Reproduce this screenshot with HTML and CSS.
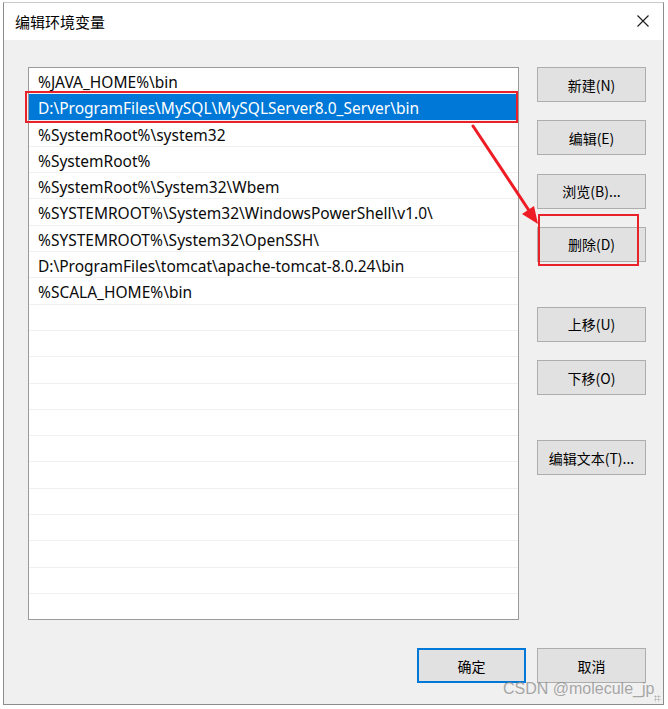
FILE: index.html
```html
<!DOCTYPE html>
<html lang="zh-CN">
<head>
<meta charset="utf-8">
<title>编辑环境变量</title>
<link rel="stylesheet" href="styles.css">
</head>
<body>
<div class="window">
  <div class="titlebar">
    <span class="title">编辑环境变量</span>
    <svg class="close" width="12" height="12" viewBox="0 0 12 12"><path d="M0.5 0.5 L11.5 11.5 M11.5 0.5 L0.5 11.5" stroke="#1a1a1a" stroke-width="1.1" fill="none"/></svg>
  </div>
  <div class="body">
    <div class="main">
      <div class="list">
        <div class="row">%JAVA_HOME%\bin</div>
        <div class="row selected">D:\ProgramFiles\MySQL\MySQLServer8.0_Server\bin</div>
        <div class="row">%SystemRoot%\system32</div>
        <div class="row">%SystemRoot%</div>
        <div class="row">%SystemRoot%\System32\Wbem</div>
        <div class="row">%SYSTEMROOT%\System32\WindowsPowerShell\v1.0\</div>
        <div class="row">%SYSTEMROOT%\System32\OpenSSH\</div>
        <div class="row">D:\ProgramFiles\tomcat\apache-tomcat-8.0.24\bin</div>
        <div class="row">%SCALA_HOME%\bin</div>
        <div class="row"></div>
        <div class="row"></div>
        <div class="row"></div>
        <div class="row"></div>
        <div class="row"></div>
        <div class="row"></div>
        <div class="row"></div>
        <div class="row"></div>
        <div class="row"></div>
        <div class="row"></div>
        <div class="row"></div>
        <div class="row last"></div>
        <div class="mark mark-row"></div>
      </div>
      <div class="buttons">
        <button class="btn">新建(N)</button>
        <button class="btn">编辑(E)</button>
        <button class="btn">浏览(B)...</button>
        <button class="btn">删除(D)</button>
        <button class="btn spaced">上移(U)</button>
        <button class="btn">下移(O)</button>
        <button class="btn spaced">编辑文本(T)...</button>
        <div class="mark mark-btn"></div>
      </div>
    </div>
    <div class="footer">
      <button class="btn default">确定</button>
      <button class="btn">取消</button>
    </div>
  </div>
</div>
<svg class="arrow" width="668" height="709" viewBox="0 0 668 709">
  <line x1="473" y1="126" x2="530" y2="212" stroke="#ee1c25" stroke-width="3" stroke-linecap="round"/>
  <polygon points="538,224 522,214 534,206" fill="#ee1c25"/>
</svg>
<div class="watermark">CSDN @molecule_jp</div>
<div class="grip"></div>
</body>
</html>
```
FILE: styles.css
```css
html, body {
  margin: 0;
  padding: 0;
  background: #ffffff;
}
body {
  position: relative;
  width: 668px;
  height: 709px;
  overflow: hidden;
  font-family: "Noto Sans", "Noto Sans CJK SC", sans-serif;
  color: #000;
}
.window {
  margin: 2px 0 0 3px;
  width: 661px;
  height: 703px;
  box-sizing: border-box;
  border: 1px solid #8c8c8c;
  border-top-color: #c8c8c8;
  display: flex;
  flex-direction: column;
  background: #f0f0f0;
}
.titlebar {
  height: 37px;
  flex: none;
  background: #ffffff;
  display: flex;
  align-items: center;
  justify-content: space-between;
  padding: 0 14px 0 11px;
}
.title {
  font-family: "Noto Sans CJK SC", sans-serif;
  font-size: 15px;
  color: #000;
  margin-top: -1px;
}
.close {
  display: block;
  margin-top: -2px;
}
.body {
  padding: 27px 17px 21px 24px;
  display: flex;
  flex-direction: column;
}
.main {
  display: flex;
  gap: 18px;
}
.list {
  position: relative;
  width: 491px;
  height: 553px;
  box-sizing: border-box;
  border: 1px solid #9a9a9a;
  background: #ffffff;
}
.row {
  height: 26.3px;
  box-sizing: border-box;
  border-bottom: 1px solid #f0f0f0;
  padding-left: 9px;
  font-size: 15.5px;
  line-height: 29px;
  white-space: nowrap;
  overflow: hidden;
  color: #0a0a0a;
}
.row.last {
  height: 24.9px;
  border-bottom: none;
}
.row.selected {
  background: #0078d7;
  color: #ffffff;
}
.mark {
  position: absolute;
  border: 2px solid #e8212b;
  box-sizing: border-box;
  pointer-events: none;
}
.mark-row {
  left: -4px;
  top: 23px;
  width: 493px;
  height: 32px;
}
.buttons {
  position: relative;
  width: 109px;
  display: flex;
  flex-direction: column;
}
.btn {
  width: 109px;
  height: 35px;
  box-sizing: border-box;
  border: 1px solid #adadad;
  background: #e1e1e1;
  font-family: "Noto Sans CJK SC", sans-serif;
  font-size: 14px;
  color: #000;
  padding: 0;
  margin: 0 0 18.3px 0;
  line-height: 1;
}
.btn.spaced {
  margin-top: 26.7px;
}
.mark-btn {
  left: 1px;
  top: 147px;
  width: 101px;
  height: 52px;
}
.footer {
  margin-top: 28px;
  display: flex;
  justify-content: flex-end;
  gap: 11px;
}
.footer .btn {
  margin: 0;
}
.btn.default {
  border: 2px solid #0078d7;
}
.arrow {
  position: absolute;
  left: 0;
  top: 0;
  pointer-events: none;
}
.watermark {
  position: absolute;
  left: 503px;
  top: 680px;
  font-family: "Liberation Sans", sans-serif;
  font-size: 16px;
  color: rgba(140, 140, 140, 0.75);
  white-space: nowrap;
  pointer-events: none;
}
.grip {
  position: absolute;
  left: 654px;
  top: 695px;
  width: 7px;
  height: 7px;
  background-image: radial-gradient(circle, #b0b0b0 0.9px, transparent 1.1px);
  background-size: 3px 3px;
}
```
